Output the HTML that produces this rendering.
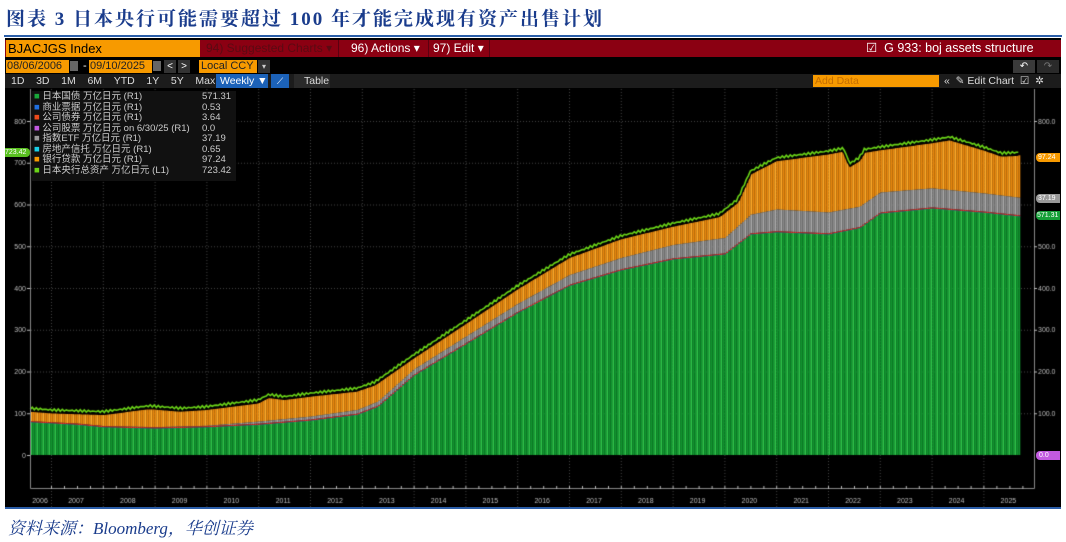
<!DOCTYPE html>
<html><head><meta charset="utf-8"><style>
*{margin:0;padding:0;box-sizing:border-box}
body{width:1066px;height:542px;background:#fff;position:relative;overflow:hidden;font-family:"Liberation Sans","Noto Sans CJK SC",sans-serif}
.title{position:absolute;left:6px;top:4px;font-family:"Liberation Serif","Noto Serif CJK SC",serif;font-weight:bold;font-size:19px;color:#1a3c8c;letter-spacing:2px}
.topline{position:absolute;left:4px;top:35px;width:1058px;height:2px;background:#2a5da8}
.panel{position:absolute;left:5px;top:38px;width:1056px;height:470px;background:#000}
.botline{position:absolute;left:5px;top:507px;width:1056px;height:2px;background:#2a5da8}
.src{position:absolute;left:8px;top:514px;font-family:"Liberation Serif","Noto Serif CJK SC",serif;font-style:italic;font-size:17px;color:#1a3c8c}
.abs{position:absolute;white-space:nowrap}
canvas{position:absolute;left:0;top:0}
</style></head><body>
<div class="title">图表 3 日本央行可能需要超过 100 年才能完成现有资产出售计划</div>
<div class="topline"></div>
<div class="panel"></div>
<div class="botline"></div>
<canvas id="c" width="1066" height="542"></canvas>
<div class="abs" style="left:5px;top:40px;width:1056px;height:17px;background:#8b0012"></div>
<div class="abs" style="left:6px;top:40px;width:194px;height:17px;background:#f79a00;color:#000;font-size:13px;line-height:17px;padding-left:2px">BJACJGS Index</div>
<div class="abs" style="left:206px;top:40px;font-size:12px;line-height:17px;color:#5a0a12">94) Suggested Charts ▾</div>
<div class="abs" style="left:338px;top:40px;width:90px;height:17px;border-left:1px solid #5a0010;font-size:12px;line-height:17px;color:#fff;padding-left:12px">96) Actions ▾</div>
<div class="abs" style="left:428px;top:40px;width:62px;height:17px;border-left:1px solid #5a0010;border-right:1px solid #5a0010;font-size:12px;line-height:17px;color:#fff;padding-left:4px">97) Edit ▾</div>
<div class="abs" style="left:866px;top:40px;font-size:12.5px;line-height:17px;color:#fff">☑&nbsp; G 933: boj assets structure</div>
<div class="abs" style="left:6px;top:60px;width:63px;height:13px;background:#f79a00;font-size:11px;line-height:13px;color:#222;padding-left:1px">08/06/2006</div>
<div class="abs" style="left:70px;top:61px;width:8px;height:10px;background:#666"></div>
<div class="abs" style="left:83px;top:60px;font-size:11px;line-height:13px;color:#fff">-</div>
<div class="abs" style="left:89px;top:60px;width:63px;height:13px;background:#f79a00;font-size:11px;line-height:13px;color:#222;padding-left:1px">09/10/2025</div>
<div class="abs" style="left:153px;top:61px;width:8px;height:10px;background:#666"></div>
<div class="abs" style="left:164px;top:60px;width:12px;height:13px;background:#333;color:#fff;font-size:10px;text-align:center;line-height:13px">&lt;</div>
<div class="abs" style="left:178px;top:60px;width:12px;height:13px;background:#333;color:#fff;font-size:10px;text-align:center;line-height:13px">&gt;</div>
<div class="abs" style="left:199px;top:60px;width:58px;height:13px;background:#f79a00;font-size:11px;line-height:13px;color:#222;padding-left:2px">Local CCY</div>
<div class="abs" style="left:258px;top:60px;width:12px;height:13px;background:#333;color:#ccc;font-size:8px;text-align:center;line-height:13px">▾</div>
<div class="abs" style="left:1013px;top:60px;width:22px;height:13px;background:#3a3a3a;color:#fff;font-size:10px;text-align:center;line-height:13px">↶</div>
<div class="abs" style="left:1037px;top:60px;width:22px;height:13px;background:#2a2a2a;color:#777;font-size:10px;text-align:center;line-height:13px">↷</div>
<div class="abs" style="left:5px;top:74px;width:1056px;height:14px;background:#1c1c1c"></div>
<div class="abs" style="left:11px;top:74px;font-size:10.5px;line-height:14px;color:#ddd">1D&nbsp;&nbsp;&nbsp;&nbsp;3D&nbsp;&nbsp;&nbsp;&nbsp;1M&nbsp;&nbsp;&nbsp;&nbsp;6M&nbsp;&nbsp;&nbsp;&nbsp;YTD&nbsp;&nbsp;&nbsp;&nbsp;1Y&nbsp;&nbsp;&nbsp;&nbsp;5Y&nbsp;&nbsp;&nbsp;&nbsp;Max</div>
<div class="abs" style="left:216px;top:74px;width:52px;height:14px;background:#1c62b8;font-size:10.5px;line-height:14px;color:#fff;padding-left:4px">Weekly ▼</div>
<div class="abs" style="left:271px;top:74px;width:18px;height:14px;background:#1c62b8;font-size:9px;line-height:14px;color:#fff;text-align:center">⟋</div>
<div class="abs" style="left:294px;top:74px;width:36px;height:14px;background:#2a2a2a;font-size:10.5px;line-height:14px;color:#ddd;padding-left:10px">Table</div>
<div class="abs" style="left:813px;top:75px;width:126px;height:12px;background:#f79a00;font-size:10.5px;line-height:12px;color:#c46d00;padding-left:2px">Add Data</div>
<div class="abs" style="left:944px;top:74px;font-size:10.5px;line-height:14px;color:#ddd">«&nbsp;&nbsp;✎ Edit Chart&nbsp;&nbsp;☑&nbsp;&nbsp;✲</div>
<div class="abs" style="left:31px;top:91px;width:205px;height:90px;background:#111"></div>
<div class="abs" style="left:34px;top:92px;font-size:9.5px;line-height:10.5px;color:#ccc">
<div><span style="color:#19a83a">■</span> 日本国债 万亿日元 (R1)</div>
<div><span style="color:#1f6fe0">■</span> 商业票据 万亿日元 (R1)</div>
<div><span style="color:#ee4a1a">■</span> 公司债券 万亿日元 (R1)</div>
<div><span style="color:#c25ae0">■</span> 公司股票 万亿日元 on 6/30/25 (R1)</div>
<div><span style="color:#999">■</span> 指数ETF 万亿日元 (R1)</div>
<div><span style="color:#19d0e8">■</span> 房地产信托 万亿日元 (R1)</div>
<div><span style="color:#f79a00">■</span> 银行贷款 万亿日元 (R1)</div>
<div><span style="color:#6ad418">■</span> 日本央行总资产 万亿日元 (L1)</div>
</div>
<div class="abs" style="left:202px;top:92px;font-size:9.5px;line-height:10.5px;color:#ccc">571.31<br>0.53<br>3.64<br>0.0<br>37.19<br>0.65<br>97.24<br>723.42</div>
<div class="abs" style="left:5px;top:148px;width:25px;height:9px;background:#59c020;border-radius:0 4px 4px 0;font-size:7px;line-height:9px;color:#fff">723.42</div>
<div class="abs" style="left:1036px;top:153px;width:24px;height:9px;background:#f79a00;border-radius:4px 0 0 4px;font-size:7px;line-height:9px;color:#fff;padding-left:2px">97.24</div>
<div class="abs" style="left:1036px;top:194px;width:24px;height:9px;background:#999;border-radius:4px 0 0 4px;font-size:7px;line-height:9px;color:#fff;padding-left:2px">37.19</div>
<div class="abs" style="left:1036px;top:211px;width:24px;height:9px;background:#16a038;border-radius:4px 0 0 4px;font-size:7px;line-height:9px;color:#fff;padding-left:1px">571.31</div>
<div class="abs" style="left:1036px;top:451px;width:24px;height:9px;background:#c25ae0;border-radius:4px 0 0 4px;font-size:7px;line-height:9px;color:#fff;padding-left:3px">0.0</div>
<div class="src">资料来源：Bloomberg，华创证券</div>
<script>
const c=document.getElementById('c').getContext('2d');
const Y=v=>455-0.4175*v;
const X=t=>51+(t-2007)*51.8;
function interp(pts,t){for(let i=1;i<pts.length;i++){if(t<=pts[i][0]){const a=pts[i-1],b=pts[i];return a[1]+(b[1]-a[1])*(t-a[0])/(b[0]-a[0]);}}return pts[pts.length-1][1];}
const tot=[[2006.6,112],[2007,108],[2008,104],[2008.9,118],[2009.5,112],[2010,116],[2011,132],[2011.2,145],[2011.5,140],[2012,148],[2012.9,160],[2013.25,175],[2014,240],[2015,322],[2016,405],[2017,480],[2018,525],[2019,555],[2019.9,578],[2020.25,612],[2020.5,680],[2021,712],[2022,728],[2022.3,735],[2022.42,698],[2022.6,712],[2022.7,732],[2023,738],[2024,755],[2024.35,762],[2025,738],[2025.35,723],[2025.7,725]];
const jgb=[[2006.6,78],[2007.5,72],[2008,66],[2009,63],[2010,66],[2011,72],[2012,82],[2012.9,96],[2013.3,115],[2014,190],[2015,265],[2016,340],[2017,405],[2018,442],[2019,468],[2020,480],[2020.5,528],[2021,533],[2022,528],[2022.6,543],[2023,578],[2024,590],[2025,580],[2025.7,571]];
const etf=[[2006.6,3],[2010,4],[2011,8],[2013,12],[2016,22],[2018,30],[2020,40],[2021,55],[2025.7,45]];
c.strokeStyle='#444';c.setLineDash([1,2]);c.lineWidth=1;
for(let v=100;v<=800;v+=100){c.beginPath();c.moveTo(31,Y(v)+.5);c.lineTo(1033,Y(v)+.5);c.stroke();}
for(let y=2007;y<=2025;y++){c.beginPath();c.moveTo(X(y)+.5,89);c.lineTo(X(y)+.5,507);c.stroke();}
c.setLineDash([]);
const t0=2006.6,t1=2025.7,x0=X(t0),x1=X(t1);
for(let x=x0;x<x1;x+=2){
 const t=t0+(x-x0)/51.8;
 const T=interp(tot,t),J=interp(jgb,t),E=interp(etf,t);
 const O=T-7;
 const light=(Math.round(x/2)%3===0);
 c.fillStyle=light?'#ffab2a':'#e8880e';c.fillRect(x,Y(O),2,Y(J+E)-Y(O));
 c.fillStyle=light?'#aaa':'#8a8a8a';c.fillRect(x,Y(J+E),2,Y(J+3)-Y(J+E));
 c.fillStyle='#e03030';c.fillRect(x,Y(J+3),2,1.2);
 c.fillStyle='#2060d0';c.fillRect(x,Y(J+3)+1.2,2,0.8);
 c.fillStyle=light?'#2ec44a':'#119630';c.fillRect(x,Y(J),2,455-Y(J));
}
c.strokeStyle='#000';c.lineWidth=3;c.beginPath();
for(let x=x0;x<=x1;x+=2){const t=t0+(x-x0)/51.8;const y=Y(interp(tot,t))+2;x==x0?c.moveTo(x,y):c.lineTo(x,y);}c.stroke();
c.strokeStyle='#6ad418';c.lineWidth=1.6;c.beginPath();
for(let x=x0;x<=x1;x+=2){const t=t0+(x-x0)/51.8;const y=Y(interp(tot,t))+(Math.sin(x*1.7)*1.2);x==x0?c.moveTo(x,y):c.lineTo(x,y);}c.stroke();
c.strokeStyle='#888';c.lineWidth=1;
c.beginPath();c.moveTo(30.5,89);c.lineTo(30.5,488.5);c.lineTo(1034.5,488.5);c.lineTo(1034.5,89);c.stroke();
c.font='7px "Liberation Sans",sans-serif';c.fillStyle='#bbb';
c.textAlign='right';
for(let v=0;v<=800;v+=100){c.fillText(String(v),26,Y(v)+2.5);c.fillRect(27,Y(v),3,1);}
c.textAlign='left';
for(let v=100;v<=800;v+=100){if(v==700||v==600)continue;c.fillText(v.toFixed(1),1038,Y(v)+2.5);c.fillRect(1034,Y(v),3,1);}
c.textAlign='center';
const yrs=[[2006,40]];for(let y=2007;y<=2025;y++)yrs.push([y,X(y)+25]);
yrs.forEach(a=>c.fillText(String(a[0]),a[1],503));
for(let y=2007;y<=2025;y++){for(let q=0;q<4;q++)c.fillRect(X(y)+q*13,486,1,3);}
</script>
</body></html>
